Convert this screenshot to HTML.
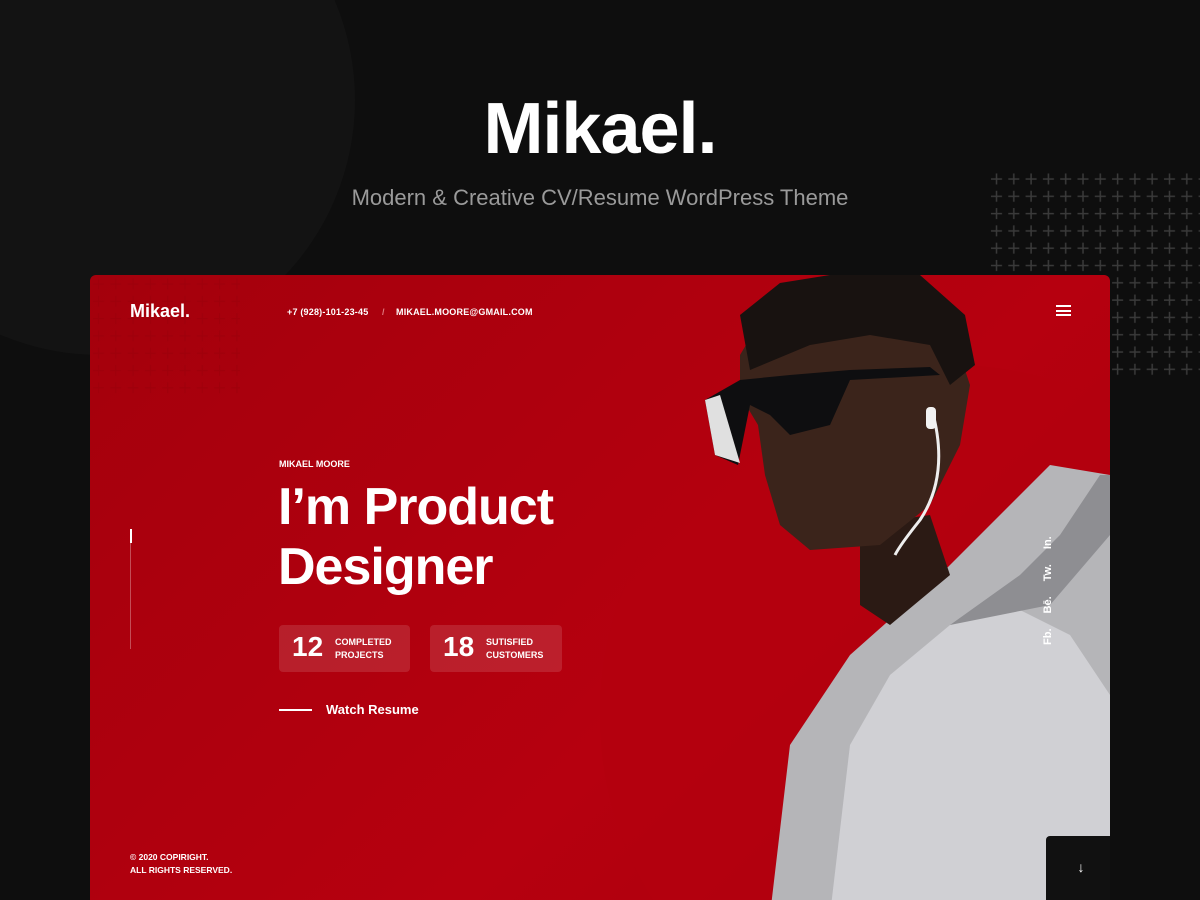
<!DOCTYPE html>
<html><head><meta charset="utf-8"><style>
*{margin:0;padding:0;box-sizing:border-box}
body{width:1200px;height:900px;overflow:hidden;background:#0e0e0e;font-family:"Liberation Sans",sans-serif;position:relative;color:#fff}
.circ{position:absolute;left:-155px;top:-155px;width:510px;height:510px;border-radius:50%;background:#131313}
h1{position:absolute;top:88px;left:0;width:1200px;text-align:center;font-size:72px;font-weight:700;letter-spacing:-1px}
.sub{position:absolute;top:185px;left:0;width:1200px;text-align:center;font-size:22px;color:#9a9a9a}
.card{position:absolute;left:90px;top:275px;width:1020px;height:625px;border-radius:6px 6px 0 0;overflow:hidden;background:linear-gradient(135deg,#a4000c,#b6000f 60%,#a8000c)}
.logo{position:absolute;left:40px;top:26px;font-size:18px;font-weight:700}
.ct{position:absolute;top:32px;font-size:9px;font-weight:700;letter-spacing:.2px}
.t{position:absolute;font-weight:700}
.stat{position:absolute;top:350px;height:47px;border-radius:4px;background:rgba(255,255,255,.12)}
.stat b{position:absolute;left:13px;top:6px;font-size:28px}
.stat span{position:absolute;left:56px;top:11px;font-size:9px;font-weight:700;line-height:13px}
</style></head><body>
<div class="circ"></div>
<h1>Mikael.</h1>
<div class="sub">Modern &amp; Creative CV/Resume WordPress Theme</div>
<svg style="position:absolute;left:988px;top:170px" width="212" height="210">
<defs><pattern id="p" width="17.3" height="17.3" patternUnits="userSpaceOnUse"><path d="M3 9H14M8.5 3.5V14.5" stroke="#3a3a3a" stroke-width="1.5"/></pattern></defs>
<rect width="212" height="210" fill="url(#p)"/></svg>
<div class="card">
<svg width="1020" height="625" style="position:absolute;left:0;top:0">
<defs><pattern id="q" width="17.3" height="17.3" patternUnits="userSpaceOnUse"><path d="M3 9H14M8.5 3.5V14.5" stroke="#9a000a" stroke-width="1.2"/></pattern></defs>
<rect width="150" height="120" fill="url(#q)" opacity=".6"/>
<circle cx="860" cy="440" r="350" fill="#b3000e" opacity=".7"/>
<path d="M680 640 L700 470 L760 380 L850 300 L900 250 L960 190 L1020 200 L1020 640Z" fill="#b5b5b8"/>
<path d="M740 640 L760 470 L800 400 L860 350 L920 330 L980 360 L1020 420 L1020 640Z" fill="#d0d0d4"/>
<path d="M860 350 L930 300 L970 260 L1010 200 L1020 200 L1020 260 L960 330Z" fill="#8e8e92"/>
<path d="M770 250 L840 240 L860 300 L800 350 L770 330Z" fill="#2b1a14"/>
<path d="M650 80 L680 30 L740 10 L810 15 L860 50 L880 110 L870 170 L840 230 L790 270 L720 275 L690 250 L675 200 L668 150 L650 120Z" fill="#3b241b"/>
<path d="M650 40 L690 8 L740 0 L830 0 L875 40 L885 90 L860 110 L840 70 L780 60 L720 70 L660 95Z" fill="#181210"/>
<path d="M615 125 L650 105 L700 100 L760 95 L840 92 L850 100 L760 105 L740 150 L700 160 L680 140 L660 130 L648 190 L625 180Z" fill="#0e0e10"/>
<path d="M615 125 L630 120 L650 188 L625 180Z" fill="#e0e0e0"/>
<path d="M842 135 Q860 200 830 245 Q810 270 805 280" stroke="#eee" stroke-width="3" fill="none"/>
<rect x="836" y="132" width="10" height="22" rx="4" fill="#f2f2f2"/>
</svg>
<div class="logo">Mikael.</div>
<div class="ct" style="left:197px">+7 (928)-101-23-45</div>
<div class="ct" style="left:292px;color:#e07a80">/</div>
<div class="ct" style="left:306px">MIKAEL.MOORE@GMAIL.COM</div>
<div style="position:absolute;left:966px;top:30px;width:15px;height:11px;border-top:2px solid #fff;border-bottom:2px solid #fff"><div style="margin-top:2.5px;height:2px;background:#fff"></div></div>
<div style="position:absolute;left:40px;top:254px;width:1px;height:120px;background:rgba(255,255,255,.3)"></div>
<div style="position:absolute;left:39.5px;top:254px;width:2px;height:14px;background:#fff"></div>
<div class="t" style="left:189px;top:184px;font-size:9px">MIKAEL MOORE</div>
<div class="t" style="left:188px;top:202px;font-size:52px;line-height:60px;letter-spacing:-1px">I’m Product<br>Designer</div>
<div class="stat" style="left:189px;width:131px"><b>12</b><span>COMPLETED<br>PROJECTS</span></div>
<div class="stat" style="left:340px;width:132px"><b>18</b><span>SUTISFIED<br>CUSTOMERS</span></div>
<div style="position:absolute;left:189px;top:434px;width:33px;height:1.5px;background:#fff"></div>
<div class="t" style="left:236px;top:427px;font-size:13px">Watch Resume</div>
<div class="t" style="left:40px;top:576px;font-size:8.5px;line-height:13px">© 2020 COPIRIGHT.<br>ALL RIGHTS RESERVED.</div>
<div style="position:absolute;left:952px;top:370px;transform:rotate(-90deg);transform-origin:0 0;font-size:11px;font-weight:700;white-space:nowrap;word-spacing:12px">Fb. Bē. Tw. In.</div>
<div style="position:absolute;left:956px;top:561px;width:70px;height:64px;background:#111;border-radius:4px 0 0 0;font-size:14px;text-align:center;padding-top:23px">↓</div>
</div>
</body></html>
